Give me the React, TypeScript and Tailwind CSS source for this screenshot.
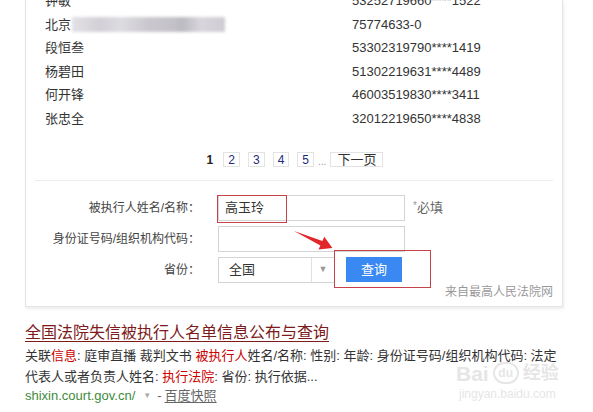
import React from 'react';

const rows: { name: string; code: string; blur?: boolean }[] = [
  { name: '钟敏', code: '53252719660****1522' },
  { name: '北京', code: '75774633-0', blur: true },
  { name: '段恒叁', code: '53302319790****1419' },
  { name: '杨碧田', code: '51302219631****4489' },
  { name: '何开锋', code: '46003519830****3411' },
  { name: '张忠全', code: '32012219650****4838' },
];

const font = "font-['Liberation_Sans','Noto_Sans_CJK_SC',sans-serif]";

function PageBox({ children }: { children: React.ReactNode }) {
  return (
    <span className="h-[15px] px-[4px] flex items-center border border-[#e3e3e3] text-[12px] text-[#1f2b7a] leading-none">
      {children}
    </span>
  );
}

export default function App() {
  return (
    <div className={`relative w-[593px] h-[412px] overflow-hidden bg-white ${font}`}>
      {/* result card */}
      <div className="ml-[25px] w-[538px] border-x border-b border-[#e4e4e4] shadow-[1px_2px_3px_rgba(0,0,0,0.08)] flex flex-col">
        <div className="-mt-[11px] flex flex-col">
          {rows.map((r) => (
            <div key={r.name} className="h-[23.6px] flex items-center text-[13px] text-[#333]">
              <div className="w-[326px] pl-[19px] flex items-center">
                <span>{r.name}</span>
                {r.blur && (
                  <span className="ml-[1px] w-[153px] h-[15px] blur-[1.5px] bg-[linear-gradient(90deg,#e2e1e5_0%,#d2d0d6_18%,#dddce1_32%,#cac8ce_50%,#c4c2c9_66%,#bcbac1_72%,#d8d6dc_84%,#cfcdd3_100%)]" />
                )}
              </div>
              <span>{r.code}</span>
            </div>
          ))}
        </div>

        {/* pagination */}
        <div className="mt-[20px] flex items-center justify-center gap-[8px] pl-[2px]">
          <span className="text-[12px] font-bold text-[#222] mr-[2px]">1</span>
          <PageBox>2</PageBox>
          <PageBox>3</PageBox>
          <PageBox>4</PageBox>
          <PageBox>5</PageBox>
          <span className="-mx-[4px] text-[10px] text-[#999] self-end">...</span>
          <PageBox>
            <span className="text-[#333] text-[13px] px-[2px]">下一页</span>
          </PageBox>
        </div>

        <div className="mt-[11px] mx-[9px] h-px bg-[#ececec]" />

        {/* form */}
        <div className="mt-[14px] flex flex-col gap-[5px] text-[13px] text-[#333]">
          <div className="h-[26px] flex items-center">
            <label className="w-[174px] text-right text-[12px] text-[#444]">被执行人姓名/名称：</label>
            <div className="ml-[18px] w-[187px] h-[26px] border border-[#d4d4d4] flex items-center pl-[6px]">高玉玲</div>
            <span className="ml-[8px] text-[#666]">
              <span className="text-[10px] text-[#999] align-top">*</span>必填
            </span>
          </div>
          <div className="h-[26px] flex items-center">
            <label className="w-[174px] text-right text-[12px] text-[#444] whitespace-nowrap">身份证号码/组织机构代码：</label>
            <div className="ml-[18px] w-[187px] h-[26px] border border-[#d4d4d4]" />
          </div>
          <div className="h-[26px] flex items-center">
            <label className="w-[174px] text-right text-[12px] text-[#444]">省份：</label>
            <div className="ml-[18px] w-[117px] h-[26px] border border-[#d4d4d4] flex items-center">
              <span className="flex-1 pl-[10px]">全国</span>
              <span className="w-[23px] h-full border-l border-[#e0e0e0] flex items-center justify-center text-[9px] text-[#999]">▼</span>
            </div>
            <button className="ml-[11px] w-[56px] h-[25px] bg-[#3a88f2] text-white text-[13px] flex items-center justify-center">查询</button>
          </div>
        </div>

        <div className="mt-[1px] pr-[9px] text-right text-[12px] text-[#999] leading-[16px]">来自最高人民法院网</div>
        <div className="h-[6px]" />
      </div>

      {/* search result */}
      <div className="mt-[16px] ml-[25px] flex flex-col whitespace-nowrap">
        <a className="text-[16px] leading-[20px] text-[#7d1a1a] underline underline-offset-[3px] decoration-[#7d1a1a]">
          全国法院失信被执行人名单信息公布与查询
        </a>
        <div className="mt-[2px] text-[13px] leading-[21px] text-[#333]">
          关联<span className="text-[#c00]">信息</span>: 庭审直播 裁判文书 <span className="text-[#c00]">被执行人</span>姓名/名称: 性别: 年龄: 身份证号码/组织机构代码: 法定
        </div>
        <div className="text-[13px] leading-[21px] text-[#333]">
          代表人或者负责人姓名: <span className="text-[#c00]">执行法院</span>: 省份: 执行依据...
        </div>
        <div className="text-[13px] leading-[18px] flex items-center">
          <span className="text-[#3f8a3a]">shixin.court.gov.cn/</span>
          <span className="ml-[8px] text-[8px] text-[#aaa]">▼</span>
          <span className="ml-[6px] text-[#666]">-</span>
          <span className="ml-[3px] text-[#666] underline underline-offset-2">百度快照</span>
        </div>
      </div>

      {/* annotations */}
      <div className="absolute left-[217px] top-[195px] w-[70px] h-[28px] border-[1.5px] border-[#c5424a]" />
      <div className="absolute left-[334px] top-[250px] w-[97px] h-[38px] border-[1.5px] border-[#c5424a]" />
      <svg className="absolute inset-0 pointer-events-none" width="593" height="412">
        <polygon
          points="294,231 322.4,240.9 324.3,236.8 332.4,248.1 318.5,249.6 320.4,245.5"
          fill="#e3262a"
        />
      </svg>

      {/* watermark */}
      <div className="absolute left-[456px] top-[362px] flex flex-col items-center text-[#e6e6e6] leading-none">
        <div className="flex items-center gap-[4px] text-[21px] font-bold">
          <span>Bai</span>
          <span className="w-[26px] h-[22px] rounded-full border-2 border-[#e6e6e6] text-[12px] flex items-center justify-center">du</span>
          <span className="text-[18px]">经验</span>
        </div>
        <div className="mt-[4px] text-[12px]">jingyan.baidu.com</div>
      </div>
    </div>
  );
}
